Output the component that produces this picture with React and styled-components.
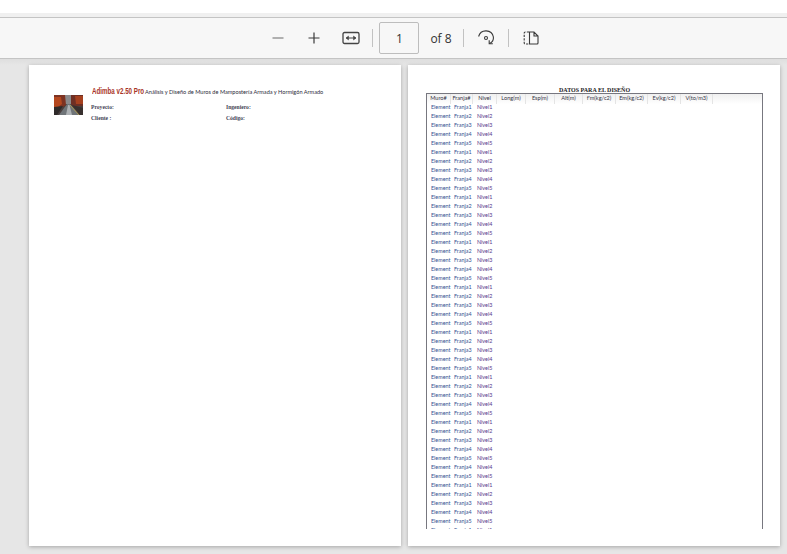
import React from 'react';
import styled, { createGlobalStyle } from 'styled-components';

const GlobalStyle = createGlobalStyle`
  html, body {
    margin: 0;
    height: 100%;
    overflow: hidden;
    background: #e6e6e6;
    font-family: "Liberation Sans", sans-serif;
  }
`;

const Shell = styled.div`
  width: 787px;
  height: 554px;
  display: flex;
  flex-direction: column;
  overflow: hidden;
`;

const TopStrip = styled.div`
  height: 13px;
  background: #ffffff;
`;

const TabEdge = styled.div`
  height: 4px;
  background: #f0f0f0;
`;

const Toolbar = styled.div`
  height: 40px;
  flex: none;
  display: flex;
  align-items: center;
  justify-content: center;
  padding-left: 22px;
  background: #f7f7f7;
  border-top: 1px solid #c4c4c4;
  border-bottom: 1px solid #c4c4c4;
`;

const ToolButton = styled.button`
  width: 22px;
  height: 22px;
  padding: 0;
  margin: ${(p) => p.$margin || '0'};
  display: flex;
  align-items: center;
  justify-content: center;
  background: none;
  border: 0;
  color: ${(p) => (p.$muted ? '#8a8a8a' : '#3a3a3a')};
`;

const Separator = styled.div`
  width: 1px;
  height: 18px;
  background: #c2c2c2;
  margin: ${(p) => p.$margin};
`;

const PageInput = styled.div`
  width: 38px;
  height: 30px;
  display: flex;
  align-items: center;
  justify-content: center;
  border: 1px solid #bdbdbd;
  border-radius: 2px;
  font-family: "Open Sans", sans-serif;
  font-size: 12px;
  color: #333333;
`;

const PageCount = styled.span`
  margin: 0 11px;
  font-family: "Open Sans", sans-serif;
  font-size: 12px;
  color: #333333;
`;

const Viewer = styled.div`
  flex: 1;
  display: flex;
  gap: 7px;
  padding: 6px 0 0 29px;
  background: linear-gradient(#dedede, #e6e6e6 6px);
`;

const Sheet = styled.div`
  width: 372px;
  height: 481px;
  flex: none;
  box-sizing: border-box;
  background: #ffffff;
  box-shadow: 0 1px 4px rgba(0, 0, 0, 0.28);
  padding: ${(p) => p.$padding};
`;

const CoverHeader = styled.div`
  display: flex;
  align-items: flex-start;
`;

const Thumb = styled.svg`
  width: 29px;
  height: 20px;
  flex: none;
  margin: 9px 8px 0 0;
  display: block;
`;

const TitleLine = styled.div`
  display: flex;
  align-items: baseline;
  margin-left: 1px;
  height: 11px;
`;

const Brand = styled.span`
  width: 53px;
  flex: none;
  font-family: "Liberation Sans", sans-serif;
  font-size: 9px;
  font-weight: 700;
  color: #a83326;
  transform: scaleX(0.69);
  transform-origin: left;
  white-space: nowrap;
`;

const Subtitle = styled.span`
  font-family: "Lato", sans-serif;
  font-size: 5.6px;
  color: #2c2c3a;
  white-space: nowrap;
`;

const MetaGrid = styled.div`
  display: grid;
  grid-template-columns: 135px 100px;
  grid-auto-rows: 11px;
  margin-top: 5px;
`;

const MetaLabel = styled.span`
  font-family: "Liberation Serif", serif;
  font-size: 5.6px;
  font-weight: 700;
  line-height: 10px;
  color: #444455;
`;

const TableTitle = styled.div`
  height: 6px;
  text-align: center;
  font-family: "Liberation Serif", serif;
  font-size: 6px;
  font-weight: 700;
  line-height: 6px;
  color: #222222;
`;

const TableFrame = styled.div`
  height: 436px;
  box-sizing: border-box;
  overflow: hidden;
  border: 1px solid #77777f;
  border-bottom: 0;
`;

const HeadRow = styled.div`
  display: flex;
  height: 10px;
  background: linear-gradient(#f0f0f0, #ffffff);
`;

const HeadCell = styled.div`
  width: ${(p) => p.$w}px;
  flex: none;
  box-sizing: border-box;
  border-right: 1px solid #e4e4e4;
  text-align: center;
  font-family: "Lato", sans-serif;
  font-size: 5.6px;
  line-height: 8px;
  color: #333344;
  white-space: nowrap;
`;

const Row = styled.div`
  display: flex;
  height: 9px;
  padding-left: 4px;
  line-height: 7px;
  font-family: "Lato", sans-serif;
  font-size: 5.4px;
`;

const Cell = styled.span`
  width: ${(p) => p.$w}px;
  flex: none;
  color: ${(p) => p.$color};
`;

const columns = [
  ['Muro#', 24], ['Franja#', 22], ['Nivel', 24], ['Long(m)', 29], ['Esp(m)', 29],
  ['Alt(m)', 28], ["f'm(kg/c2)", 33], ['Em(kg/c2)', 32], ['Ev(kg/c2)', 33], ['V(to/m3)', 32],
];

// the document repeats 4 and 5 once near the end of the page
const rows = Array.from({ length: 48 }, (_, i) => {
  if (i < 40) return (i % 5) + 1;
  if (i < 42) return i - 36;
  return ((i - 42) % 5) + 1;
});

const ZoomOut = () => (
  <svg width="16" height="16" viewBox="0 0 16 16" fill="none" stroke="currentColor" strokeWidth="1.3">
    <path d="M2.5 8h11" />
  </svg>
);

const ZoomIn = () => (
  <svg width="16" height="16" viewBox="0 0 16 16" fill="none" stroke="currentColor" strokeWidth="1.2">
    <path d="M2.5 8h11M8 2.5v11" />
  </svg>
);

const FitWidth = () => (
  <svg width="18" height="14" viewBox="0 0 18 14" fill="none" stroke="#444444">
    <rect x="1" y="1.5" width="16" height="11" rx="1.5" strokeWidth="1.3" />
    <path d="M4 7h10" strokeWidth="1" />
    <path d="M6.5 5L4 7l2.5 2zM11.5 5L14 7l-2.5 2z" fill="#444444" strokeWidth="0.5" />
  </svg>
);

const Rotate = () => (
  <svg width="18" height="18" viewBox="0 0 18 18" fill="none" stroke="currentColor" strokeWidth="1.1">
    <path d="M1.6 7.5A7.6 7.6 0 0 1 16.4 8c.3 2.7-1 5.2-3.8 6.6" />
    <circle cx="9" cy="9" r="1.5" />
    <path d="M12.2 11.2v3.6h3.6" />
  </svg>
);

const TwoPage = () => (
  <svg width="18" height="16" viewBox="0 0 18 16" fill="none" stroke="currentColor" strokeWidth="1.1">
    <path d="M7 2H3.2a1 1 0 0 0-1 1v10a1 1 0 0 0 1 1H7" strokeDasharray="2.2 1.3" />
    <path d="M7.5 2H12l4 4v7a1 1 0 0 1-1 1H7.5zM12 2v4h4" />
  </svg>
);

const RoadPhoto = () => (
  <Thumb viewBox="0 0 29 20" preserveAspectRatio="none">
    <rect width="29" height="20" fill="#4a3f3e" />
    <rect x="9" width="11" height="9" fill="#8b8a8c" />
    <path d="M0 0h11l1 10-3 2H0z" fill="#7d3322" />
    <path d="M0 2h7l1 7-4 3H0z" fill="#b5481f" />
    <path d="M17 0h12v11H19l-2-2z" fill="#6e2f24" />
    <path d="M21 1h8v8h-7z" fill="#a5401f" />
    <path d="M13 9h3l9 11H5z" fill="#6f7478" />
    <path d="M14 10h1.5l2.5 10h-6z" fill="#adb1b4" />
    <path d="M0 12l9-1-6 9H0z" fill="#2e2a2a" />
    <path d="M29 13l-11-3 8 10h3z" fill="#38302e" />
    <path d="M25 20l-9-10" stroke="#c9b24c" strokeWidth="0.7" />
  </Thumb>
);

const App = () => (
  <Shell>
    <GlobalStyle />
    <TopStrip />
    <TabEdge />
    <Toolbar>
      <ToolButton $muted><ZoomOut /></ToolButton>
      <ToolButton $margin="0 0 0 14px"><ZoomIn /></ToolButton>
      <ToolButton $margin="0 0 0 15px"><FitWidth /></ToolButton>
      <Separator $margin="0 6px 0 10px" />
      <PageInput>1</PageInput>
      <PageCount>of 8</PageCount>
      <Separator $margin="0 11px 0 0" />
      <ToolButton><Rotate /></ToolButton>
      <Separator $margin="0 11px" />
      <ToolButton><TwoPage /></ToolButton>
    </Toolbar>
    <Viewer>
      <Sheet $padding="21px 0 0 25px">
        <CoverHeader>
          <RoadPhoto />
          <div>
            <TitleLine>
              <Brand>Adimba v2.50 Pro</Brand>
              <Subtitle>Análisis y Diseño de Muros de Mampostería Armada y Hormigón Armado</Subtitle>
            </TitleLine>
            <MetaGrid>
              <MetaLabel>Proyecto:</MetaLabel>
              <MetaLabel>Ingeniero:</MetaLabel>
              <MetaLabel>Cliente :</MetaLabel>
              <MetaLabel>Código:</MetaLabel>
            </MetaGrid>
          </div>
        </CoverHeader>
      </Sheet>
      <Sheet $padding="22px 17px 0 18px">
        <TableTitle>DATOS PARA EL DISEÑO</TableTitle>
        <TableFrame>
          <HeadRow>
            {columns.map(([name, w]) => (
              <HeadCell key={name} $w={w}>{name}</HeadCell>
            ))}
          </HeadRow>
          {rows.map((n, i) => (
            <Row key={i}>
              <Cell $w={23} $color="#34508f">Element</Cell>
              <Cell $w={23} $color="#34508f">Franja{n}</Cell>
              <Cell $w={24} $color="#55378a">Nivel{n}</Cell>
            </Row>
          ))}
        </TableFrame>
      </Sheet>
    </Viewer>
  </Shell>
);

export default App;
